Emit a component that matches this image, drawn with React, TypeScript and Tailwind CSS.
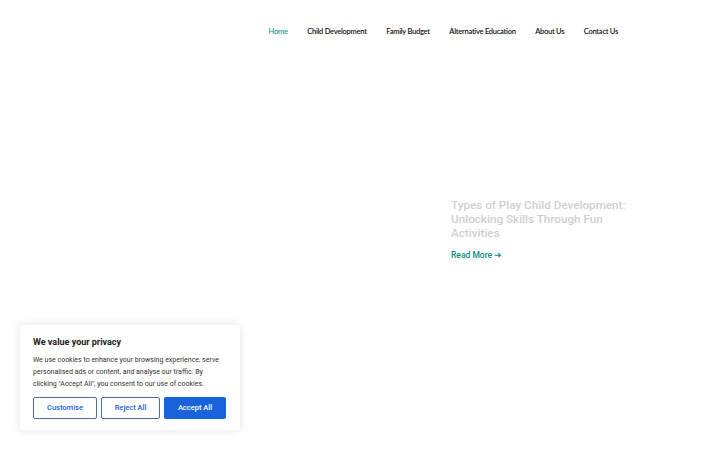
export default function App() {
  const nav = ["Home", "Child Development", "Family Budget", "Alternative Education", "About Us", "Contact Us"];
  return (
    <div className="relative w-[720px] h-[450px] bg-white overflow-hidden" style={{ fontFamily: "Roboto, 'Liberation Sans', sans-serif" }}>
      <header className="h-[62px] pt-[2px] flex items-center justify-end pr-[102px]">
        <nav className="flex items-center gap-[19.5px] text-[7.5px] tracking-[-0.25px] font-semibold" style={{ fontFamily: "Lato, 'Open Sans', sans-serif" }}>
          {nav.map((n, i) => (
            <a key={n} className={i === 0 ? "text-[#1a9e95]" : "text-[#111]"}>{n}</a>
          ))}
        </nav>
      </header>
      <main className="flex pl-[451px] pt-[136px]">
        <article className="w-[190px]">
          <h2 className="text-[11.7px] leading-[14px] font-medium text-[#cfcfcf]">
            Types of Play Child Development: Unlocking Skills Through Fun Activities
          </h2>
          <a className="mt-[9px] block text-[8.5px] font-medium text-[#138a80]">Read More ➔</a>
        </article>
      </main>
      <div className="absolute left-[20px] top-[325px] w-[220px] h-[105px] bg-white rounded-[3px] shadow-[0_0_10px_rgba(0,0,0,0.12)] px-[13px] pt-[11px]">
        <h3 className="text-[9px] font-bold text-[#212121] leading-[12px]">We value your privacy</h3>
        <p className="mt-[6px] text-[7px] leading-[12px] text-[#333]">
          We use cookies to enhance your browsing experience, serve personalised ads or content, and analyse our traffic. By clicking "Accept All", you consent to our use of cookies.
        </p>
        <div className="mt-[7px] flex gap-[4px]">
          <button className="w-[64px] h-[22px] border-[1.5px] border-[#4f6f9f] rounded-[2px] text-[7.5px] font-medium text-[#1863dc]">Customise</button>
          <button className="w-[59px] h-[22px] border-[1.5px] border-[#4f6f9f] rounded-[2px] text-[7.5px] font-medium text-[#1863dc]">Reject All</button>
          <button className="w-[62px] h-[22px] bg-[#1863dc] rounded-[2px] text-[7.5px] font-medium text-white">Accept All</button>
        </div>
      </div>
    </div>
  );
}
